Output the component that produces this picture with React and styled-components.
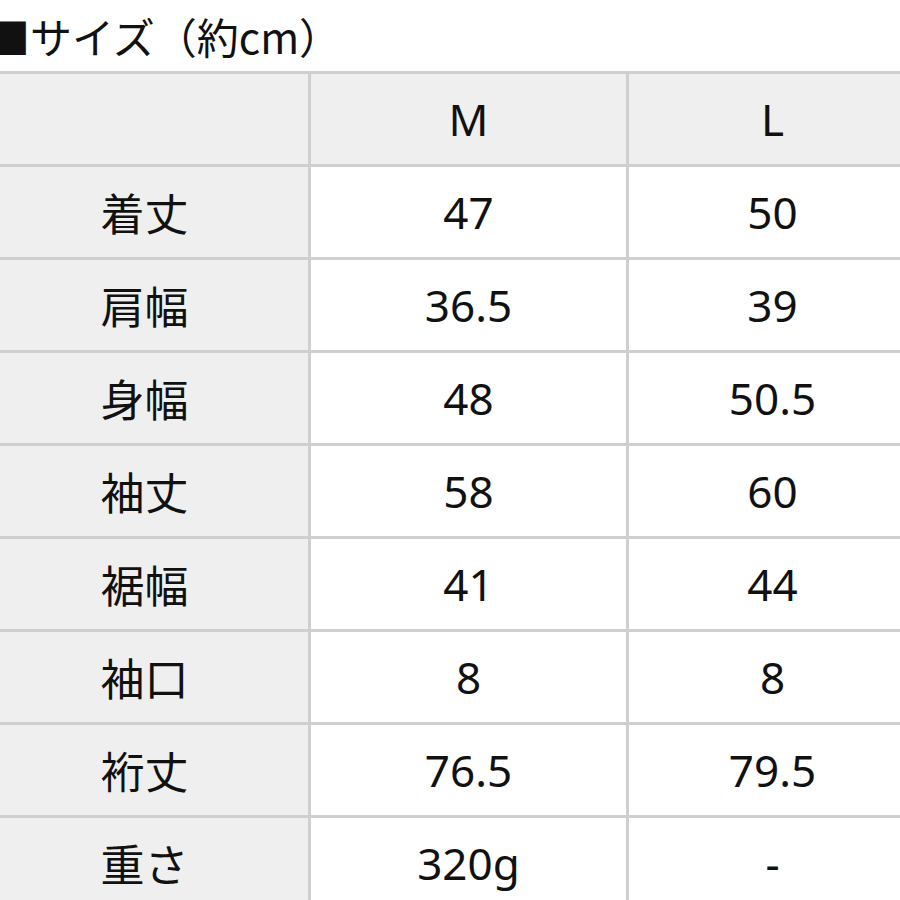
import React from 'react'
import styled, { createGlobalStyle } from 'styled-components'

const GlobalStyle = createGlobalStyle`
    html, body {
        margin: 0;
        padding: 0;
        background: #fff;
        overflow: hidden;
    }
    body {
        font-family: "Noto Sans", "Noto Sans CJK JP", sans-serif;
        color: #111;
    }
`;

const Wrap = styled.div`
    width: 960px;
    margin-left: -22px;
`;

const Title = styled.h2`
    margin: 0;
    padding: 15px 0 0 10px;
    height: 71px;
    box-sizing: border-box;
    font-family: "Noto Sans CJK JP", sans-serif;
    font-size: 42px;
    font-weight: 400;
    line-height: 1;
    color: #111;
    white-space: nowrap;
`;

const SizeTable = styled.table`
    border-collapse: collapse;
    table-layout: fixed;
    width: 938px;
    & td, & th {
        border: 3px solid #cfcfcf;
        height: 90px;
        padding: 0;
        text-align: center;
        vertical-align: middle;
        font-size: 44px;
        font-weight: 400;
        line-height: 1;
        color: #111;
    }
`;

const Head = styled.th`
    background: #efefef;
`;

const Label = styled.td`
    background: #efefef;
    font-family: "Noto Sans CJK JP", sans-serif;
`;

const Cell = styled.td`
    background: #fff;
`;

const rows = [
    { name: '着丈', m: '47', l: '50' },
    { name: '肩幅', m: '36.5', l: '39' },
    { name: '身幅', m: '48', l: '50.5' },
    { name: '袖丈', m: '58', l: '60' },
    { name: '裾幅', m: '41', l: '44' },
    { name: '袖口', m: '8', l: '8' },
    { name: '裄丈', m: '76.5', l: '79.5' },
    { name: '重さ', m: '320g', l: '-' },
]

const App = () => {
    return (
        <>
            <GlobalStyle />
            <Wrap>
                <Title>■サイズ（約cm）</Title>
                <SizeTable>
                    <colgroup>
                        <col style={{ width: 330 }} />
                        <col style={{ width: 318 }} />
                        <col style={{ width: 290 }} />
                    </colgroup>
                    <thead>
                        <tr>
                            <Head></Head>
                            <Head>M</Head>
                            <Head>L</Head>
                        </tr>
                    </thead>
                    <tbody>
                        {rows.map((r) => (
                            <tr key={r.name}>
                                <Label>{r.name}</Label>
                                <Cell>{r.m}</Cell>
                                <Cell>{r.l}</Cell>
                            </tr>
                        ))}
                    </tbody>
                </SizeTable>
            </Wrap>
        </>
    )
}

export default App
